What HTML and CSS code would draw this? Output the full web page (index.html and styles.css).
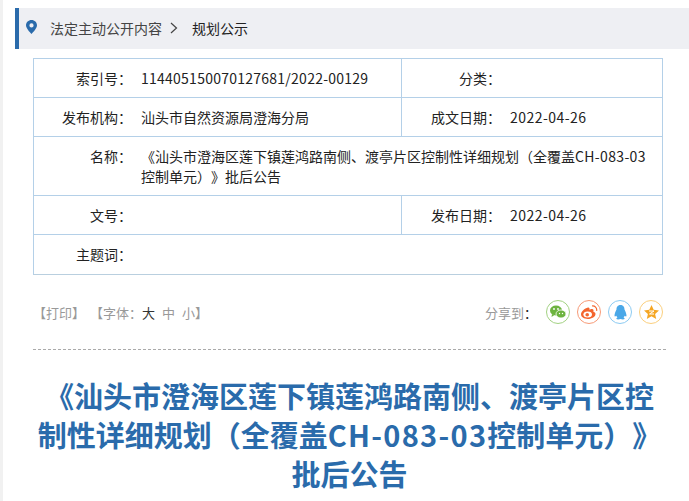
FILE: index.html
```html
<!DOCTYPE html>
<html lang="zh-CN">
<head>
<meta charset="utf-8">
<title>批后公告</title>
<link rel="stylesheet" href="styles.css">
</head>
<body>
<div class="page">
  <nav class="crumb">
    <svg class="pin" width="11" height="14" viewBox="0 0 11 14"><path fill-rule="evenodd" fill="#2a6bab" d="M5.5 0C2.400 0 0 2.400 0 5.300 0 8.800 5.500 14 5.500 14S11 8.800 11 5.300C11 2.400 8.600 0 5.500 0zM5.500 3.300a2.100 2.100 0 1 1 0 4.200 2.100 2.100 0 0 1 0-4.200z"/></svg>
    <span>法定主动公开内容</span>
    <svg class="chev" width="8" height="12" viewBox="0 0 8 12"><path fill="none" stroke="#444" stroke-width="1.200" d="M1 1l5.500 5L1 11"/></svg>
    <span class="now">规划公示</span>
  </nav>
  <div class="info">
    <div class="row h39">
      <div class="cell half"><span class="lab">索引号：</span><span class="val num-long">114405150070127681/2022-00129</span></div>
      <div class="cell rest"><span class="lab lab2">分类：</span></div>
    </div>
    <div class="row h39">
      <div class="cell half"><span class="lab">发布机构：</span><span class="val">汕头市自然资源局澄海分局</span></div>
      <div class="cell rest"><span class="lab lab2">成文日期：</span><span class="val date">2022-04-26</span></div>
    </div>
    <div class="row tall">
      <div class="cell full"><span class="lab">名称：</span><span class="val wrap">《汕头市澄海区莲下镇莲鸿路南侧、渡亭片区控制性详细规划（全覆盖<span class="code-sm">CH-083-03</span>控制单元）》批后公告</span></div>
    </div>
    <div class="row h39">
      <div class="cell half"><span class="lab">文号：</span></div>
      <div class="cell rest"><span class="lab lab2">发布日期：</span><span class="val date">2022-04-26</span></div>
    </div>
    <div class="row h39 last">
      <div class="cell full"><span class="lab">主题词：</span></div>
    </div>
  </div>
  <div class="tools">
    <div class="left">
      <span>【打印】</span>
      <span class="font">【字体：<b class="big">大</b><i>中</i><i>小</i>】</span>
    </div>
    <div class="share">
      <span class="share-lab">分享到<em>：</em></span>
      <span class="ic wx"><svg width="16" height="14" viewBox="0 0 16 14"><ellipse cx="6" cy="5.500" rx="6" ry="5" fill="#6db33f"/><path fill="#6db33f" d="M2 9l-.5 3 3-2z"/><ellipse cx="11" cy="9" rx="5" ry="4" fill="#6db33f" stroke="#fff" stroke-width=".8"/><g fill="#fff"><circle cx="4" cy="4" r=".9"/><circle cx="8" cy="4" r=".9"/><circle cx="9.500" cy="8.500" r=".7"/><circle cx="12.500" cy="8.500" r=".7"/></g></svg></span>
      <span class="ic wb"><svg width="17" height="14" viewBox="0 0 17 14"><path fill="#f4652f" d="M7 2.500C3.500 3.500 0 6.500 0 9.300 0 12 3 14 6.800 14c4.200 0 7.700-2.400 7.700-5 0-1.400-1.200-1.900-2.200-2.200.5-1.300.3-2.300-.6-2.600-1-.3-2.600.3-3.200.7.300-1.300-.2-2.800-1.500-2.400z"/><ellipse cx="6.700" cy="9.600" rx="4.300" ry="3" fill="#fff"/><circle cx="6.200" cy="9.800" r="1.800" fill="#f4652f"/><path fill="none" stroke="#f4652f" stroke-width="1.200" d="M11 1a4 4 0 0 1 4.600 4.800"/></svg></span>
      <span class="ic qq"><svg width="13" height="15" viewBox="0 0 13 15"><path fill="#4aa8e8" d="M6.500 0C3.600 0 2.500 2.300 2.500 4.500 1.800 6 .5 8.500.5 10.500c0 1 .4 1.300 1.800.3.300.8.700 1.300 1.200 1.700-1 .4-1.300 1-1 1.500.5.600 2.800.5 4 0 1.200.5 3.500.6 4 0 .3-.5 0-1.100-1-1.500.5-.4.900-.9 1.200-1.700 1.400 1 1.800.7 1.800-.3 0-2-1.300-4.500-2-6C10.500 2.300 9.400 0 6.500 0z"/></svg></span>
      <span class="ic qz"><svg width="15" height="14" viewBox="0 0 15 14"><path fill="#f5a623" d="M7.500 0l2.200 4.800 5.300.6-3.900 3.500 1.100 5.100-4.700-2.700L2.800 14l1.100-5.100L0 5.400l5.300-.6z"/><path fill="none" stroke="#fff" stroke-width="1" d="M5 6h5L5.500 9h4.500"/></svg></span>
    </div>
  </div>
  <h1 class="title"><span class="ln">《汕头市澄海区莲下镇莲鸿路南侧、渡亭片区控</span><span class="ln">制性详细规划（全覆盖<span class="code">CH-083-03</span>控制单元）》</span><span class="ln">批后公告</span></h1>
</div>
</body>
</html>
```
FILE: styles.css
```css
* { box-sizing: border-box; }
html, body { margin: 0; padding: 0; height: 501px; overflow: hidden; background: #fff; }
body { font-family: "Noto Sans CJK SC", "Liberation Sans", sans-serif; font-size: 14px; color: #333; border-left: 3px solid #f1f1f1; text-spacing-trim: space-all; }
.page { width: 672px; padding: 8px 0 0 12px; }
.crumb { height: 41px; width: 674px; background: #eeeff3; border-left: 4px solid #2a6bab; display: flex; align-items: center; padding: 0 0 2px 8px; color: #444; }
.now { color: #222; }
.pin { margin-right: 13px; margin-left: -1px; margin-top: -1px; }
.chev { margin: 0 14px 0 8px; }
.info { margin: 9px 0 0 18px; width: 630px; border: 1px solid #b4d0e8; border-bottom-color: #b9cfdf; color: #222; }
.row { display: flex; border-bottom: 1px solid #b4d0e8; }
.row.last { border-bottom: 0; }
.h39 { height: 39px; }
.tall { height: 59px; }
.cell { display: flex; align-items: center; }
.half { width: 368px; border-right: 1px solid #b4d0e8; }
.rest { flex: 1; }
.full { flex: 1; align-items: flex-start; padding-top: 9px; }
.lab { width: 98px; text-align: right; flex: none; }
.lab2 { width: 99px; }
.val { color: #222; margin-left: 9px; }
.num-long { letter-spacing: .25px; }
.date { letter-spacing: .45px; }
.code-sm { letter-spacing: .35px; }
.wrap { width: 515px; line-height: 20px; }
.full .lab { line-height: 20px; }
.tools { display: flex; justify-content: space-between; align-items: center; margin: 0 0 0 18px; width: 630px; height: 74px; font-size: 13px; color: #999; }
.left { display: flex; }
.left span + span { margin-left: 5px; }
.font b, .font i { font-weight: 400; font-style: normal; margin-right: 7px; }
.font i:last-child { margin-right: 0; }
.big { color: #333; font-size: 13px; }
.share { display: flex; align-items: center; }
.share-lab em { font-style: normal; color: #222; }
.ic { width: 24px; height: 24px; border-radius: 50%; border: 1px solid; display: flex; align-items: center; justify-content: center; margin-left: 7px; }
.share-lab + .ic { margin-left: 9px; }
.wx { border-color: #a3d283; }
.wb { border-color: #f79a77; }
.qq { border-color: #8ccbf2; }
.qz { border-color: #fbcf7d; }
.title { margin: 0 0 0 18px; width: 633px; border-top: 1px dashed #aaa; padding-top: 26px; font-size: 29px; line-height: 39px; font-weight: 700; color: #2a6bab; text-align: center; }
.ln { display: block; }
.code { letter-spacing: 1.300px; }
```
